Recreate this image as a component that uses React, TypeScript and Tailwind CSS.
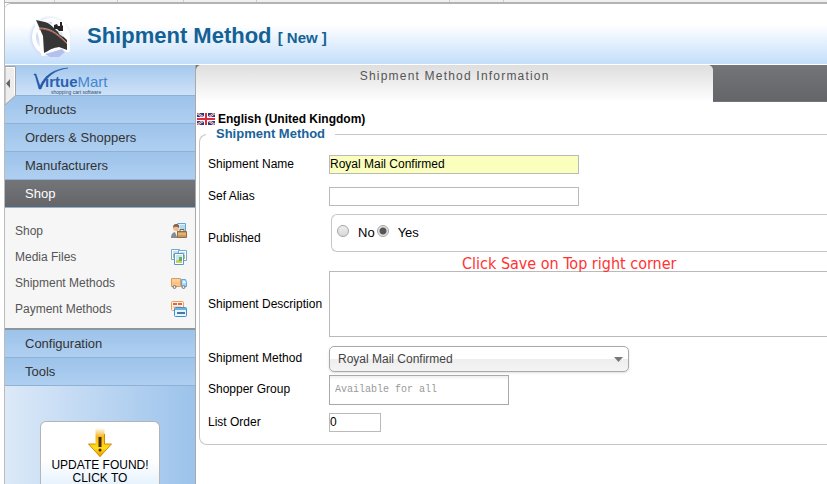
import React, { useState } from 'react';

const MAIN_LINKS = ['Products', 'Orders & Shoppers', 'Manufacturers'];
const BOTTOM_LINKS = ['Configuration', 'Tools'];

const inputClass = 'h-[19px] border border-[#bababa] text-xs text-black outline-none';

const ShipLogo = () => (
  <svg width="46" height="46" viewBox="0 0 46 46" aria-hidden="true">
    <defs>
      <radialGradient id="halo">
        <stop offset="0.75" stopColor="#b9c6ef" />
        <stop offset="1" stopColor="#dfe8fa" stopOpacity="0" />
      </radialGradient>
      <linearGradient id="globe" x1="0" y1="0" x2="1" y2="1">
        <stop offset="0" stopColor="#b4c2ee" />
        <stop offset="0.5" stopColor="#e6ecfb" />
        <stop offset="1" stopColor="#a9b8e8" />
      </linearGradient>
    </defs>
    <circle cx="23" cy="23" r="22" fill="url(#halo)" />
    <circle cx="24" cy="23" r="17" fill="url(#globe)" stroke="#fff" strokeWidth="4" />
    <path
      d="M9 7l11 3 7 4V9h9l2 8 3 9v10l-9-1-10 3-6 2-2-16z"
      fill="#fff"
      stroke="#fff"
      strokeWidth="4"
      strokeLinejoin="round"
    />
    <path d="M18 40l5 3h9l6-5-3-3-10 3z" fill="#b4c1ec" />
    <path d="M9 6l9 2c4 1 7 4 10 7l12 11 0 10-8-3c-6 1-8 2-11 4l-4 2-1-17z" fill="#363636" />
    <path d="M12 15c10 0 16 3 28 15" fill="none" stroke="#c8563c" strokeWidth="1" />
    <path d="M12 14c10 0 16 3 28 15" fill="none" stroke="#e9ded9" strokeWidth="1" strokeOpacity="0.6" />
    <path d="M27 15v-4l3-1 1 2h2V8h2v3l1 1v5h-4l-2-2z" fill="#262626" />
    <path d="M31 17l4 1 1 5-4-3z" fill="#dfe4ee" />
  </svg>
);

const VirtueMartLogo = () => (
  <svg width="80" height="29" viewBox="0 0 80 29" role="img" aria-label="VirtueMart">
    <path d="M1 8h2l4 12C12 9 21 3 35 2 22 4 13 10 8 23H6L2 9H1z" fill="#2459a6" stroke="#2459a6" strokeWidth="0.500" />
    <text x="12" y="21" fontFamily="Liberation Sans, sans-serif" fontSize="15" fill="#2961b2">
      <tspan fontWeight="700">irtue</tspan>
      <tspan fill="#4486d0">Mart</tspan>
    </text>
    <text x="18" y="28" fontFamily="Liberation Sans, sans-serif" fontSize="5" fill="#2f4d76">shopping cart software</text>
  </svg>
);

const ShopIcon = () => (
  <svg width="16" height="16" viewBox="0 0 16 16" aria-hidden="true">
    <path d="M6.500.5h8v11h-8z" fill="#dff2fc" stroke="#5fa8d8" />
    <path d="M9 3h5M9 5h5" stroke="#7cc4ec" />
    <path d="M0 15c0-4 2-6 5-6s5 2 5 6z" fill="#868b93" />
    <path d="M4 9h3l-1 5z" fill="#f4f4f4" />
    <circle cx="5" cy="5" r="3" fill="#f0bd91" />
    <path d="M2 5c0-3 1-4 3-4s4 1 3 4c-1-1-4-2-6 0z" fill="#806050" />
    <path d="M9 8V6.500h4V8" fill="none" stroke="#875a32" />
    <path d="M6.500 8.500h9v6h-9z" fill="#c99a60" stroke="#9c6c38" />
    <path d="M7 11h8" stroke="#efcf98" />
  </svg>
);

const MediaIcon = () => (
  <svg width="16" height="16" viewBox="0 0 16 16" aria-hidden="true">
    <path d="M.5.500h8v10h-8z" fill="#fff" stroke="#75a7d5" />
    <path d="M7.500 1.500h8v10h-8z" fill="#fff" stroke="#75a7d5" />
    <path d="M2 2h5v3H2zM9 3h5v6H9z" fill="#bde2f1" />
    <path d="M2 5h3v4H2zM13 6h1v4h-1z" fill="#a3c95f" />
    <path d="M3.500 4.500h9v11h-9z" fill="#fff" stroke="#5d97ce" />
    <path d="M5 6h6v5H5z" fill="#c4e6f4" />
    <path d="M5 11h6v3H5z" fill="#c6cf62" />
    <path d="M8 8h3v4H8z" fill="#6aae5b" />
  </svg>
);

const TruckIcon = () => (
  <svg width="16" height="16" viewBox="0 0 16 16" aria-hidden="true">
    <path d="M.5 3.500h9v8h-9z" fill="#ffcf9a" stroke="#e39a52" />
    <path d="M1 8h8M1 10h8" stroke="#f5b674" />
    <path d="M10.500 4.500h4l1 3v4h-5z" fill="#a7dbf9" stroke="#5ba6dc" />
    <path d="M12 6h2l1 2h-3z" fill="#edf9ff" />
    <circle cx="3.500" cy="12" r="1.500" fill="#e8e8e8" stroke="#73777d" />
    <circle cx="12.500" cy="12" r="1.500" fill="#e8e8e8" stroke="#73777d" />
  </svg>
);

const PaymentIcon = () => (
  <svg width="16" height="16" viewBox="0 0 16 16" aria-hidden="true">
    <rect x="0.500" y="0.500" width="12" height="9" rx="1" fill="#fff2d8" stroke="#e9a451" />
    <path d="M2 3h4M7 3h4" stroke="#e75f4e" strokeWidth="2" />
    <path d="M2 6h8" stroke="#f1b27a" />
    <rect x="3.500" y="6.500" width="12" height="9" rx="1" fill="#e6f6ff" stroke="#3e8fd0" />
    <path d="M4 8h11" stroke="#68b4e8" strokeWidth="2" />
    <path d="M6 12h8" stroke="#4778a9" strokeWidth="2" />
  </svg>
);

const UpdateIcon = () => (
  <svg width="26" height="30" viewBox="0 0 26 30" aria-hidden="true">
    <defs>
      <linearGradient id="arrow" x1="0" y1="0" x2="0" y2="1">
        <stop offset="0" stopColor="#f6b026" stopOpacity="0" />
        <stop offset="0.3" stopColor="#f6b91c" />
        <stop offset="0.7" stopColor="#ffdc16" />
        <stop offset="1" stopColor="#e99000" />
      </linearGradient>
    </defs>
    <path d="M8.500 0h9v16h7L13 29 1.500 16h7z" fill="url(#arrow)" />
    <path d="M17.500 6v10h7L13 28.500 1.500 16h7" fill="none" stroke="#d48a08" />
    <path d="M11.500 9h3v10h-3z" fill="#4b2a08" />
    <circle cx="13" cy="22" r="1.500" fill="#4b2a08" />
  </svg>
);

const UkFlag = () => (
  <svg width="18" height="12" viewBox="0 0 18 12" role="img" aria-label="United Kingdom">
    <path d="M0 0h18v12H0z" fill="#283c80" />
    <path d="M0 0l18 12M18 0L0 12" stroke="#fff" strokeWidth="2" />
    <path d="M0 0l18 12M18 0L0 12" stroke="#d63b4b" strokeWidth="1" />
    <path d="M9 0v12M0 6h18" stroke="#fff" strokeWidth="4" />
    <path d="M9 0v12M0 6h18" stroke="#d82c3f" strokeWidth="2" />
  </svg>
);

const SHOP_LINKS = [
  { label: 'Shop', Icon: ShopIcon },
  { label: 'Media Files', Icon: MediaIcon },
  { label: 'Shipment Methods', Icon: TruckIcon },
  { label: 'Payment Methods', Icon: PaymentIcon },
];

const MenuLink: React.FC<{ label: string }> = ({ label }) => (
  <a
    href="#"
    className="flex h-7 items-center border-b border-[#8fb1d3] bg-linear-to-b from-[#9dc3ea] to-[#aecff1] pl-5 text-[13px] text-[#333]"
  >
    {label}
  </a>
);

const Row: React.FC<{ label: string; id: string; className: string; children: React.ReactNode }> = ({
  label,
  id,
  className,
  children,
}) => (
  <div className={`flex items-center ${className}`}>
    <label htmlFor={id} id={`${id}-label`} className="w-[121px] shrink-0 text-xs whitespace-nowrap">
      {label}
    </label>
    {children}
  </div>
);

const Sidebar = () => (
  <aside className="relative flex w-[191px] shrink-0 flex-col border-r border-[#a9a9a9] bg-linear-to-r from-[#dce9f8] to-[#9cc3eb]">
    <button type="button" aria-label="Collapse menu" className="absolute top-0 left-0">
      <svg width="12" height="42" viewBox="0 0 12 42" aria-hidden="true">
        <path d="M0 1.500h10.500v29L0 40z" fill="#ededed" stroke="#a3a3a3" strokeWidth="1" />
        <path d="M1 2.500h8.500v27" fill="none" stroke="#fff" />
        <path d="M5 14v9l-4-4.500z" fill="#666" />
      </svg>
    </button>
    <div className="flex h-[31px] items-start border-b border-[#8fb1d3] bg-linear-to-b from-[#a4c8ed] to-[#cee2f8] pt-px pl-7">
      <VirtueMartLogo />
    </div>
    <nav>
      {MAIN_LINKS.map((label) => (
        <MenuLink key={label} label={label} />
      ))}
      <a
        href="#"
        className="flex h-7 items-center border-b border-[#8fb1d3] bg-linear-to-b from-[#747578] to-[#646568] pl-5 text-[13px] text-white"
      >
        Shop
      </a>
      <ul className="border-b-2 border-[#8e979f] bg-[#f6f6f6] pt-2.5 pr-2 pb-1.5 pl-2.5">
        {SHOP_LINKS.map(({ label, Icon }) => (
          <li key={label}>
            <a href="#" className="flex h-[26px] items-center justify-between text-xs text-[#555]">
              {label}
              <Icon />
            </a>
          </li>
        ))}
      </ul>
      {BOTTOM_LINKS.map((label) => (
        <MenuLink key={label} label={label} />
      ))}
    </nav>
    <a
      href="#"
      className="mx-auto mt-[35px] flex w-[120px] flex-1 flex-col items-center rounded-t-md border border-b-0 border-[#b4b4b4] bg-linear-to-b from-white from-60% to-[#e6f2fd] pt-1.5 text-center text-xs leading-[13px] text-black"
    >
      <UpdateIcon />
      <span className="mt-px">UPDATE FOUND! CLICK TO</span>
    </a>
  </aside>
);

const radioClass =
  'h-3 w-3 appearance-none rounded-full border border-[#a5a5a5] bg-linear-to-b from-[#eee] to-[#d8d8d8] checked:bg-[radial-gradient(circle,#555_0_3px,#e2e2e2_4px)]';

const ShipmentForm = () => {
  const [name, setName] = useState('Royal Mail Confirmed');
  const [alias, setAlias] = useState('');
  const [published, setPublished] = useState(true);
  const [description, setDescription] = useState('');
  const [order, setOrder] = useState('0');

  return (
    <form className="pl-[3px]">
      <fieldset className="min-w-0 rounded-l-lg border border-r-0 border-[#c6c6c6] pb-1.5 pl-2">
        <legend className="-ml-0.5 h-4 px-2.5 text-[13px] leading-4 font-bold text-[#1a629a]">Shipment Method</legend>
        <div className="pt-1.5">
          <Row label="Shipment Name" id="name" className="h-8">
            <input id="name" value={name} onChange={(e) => setName(e.target.value)} className={`w-[250px] bg-[#faffbd] ${inputClass}`} />
          </Row>
          <Row label="Sef Alias" id="alias" className="h-8">
            <input id="alias" value={alias} onChange={(e) => setAlias(e.target.value)} className={`w-[250px] bg-white ${inputClass}`} />
          </Row>
          <Row label="Published" id="published" className="h-[52px]">
            <div
              role="radiogroup"
              aria-labelledby="published-label"
              className="mt-0.5 ml-0.5 flex h-[38px] flex-1 items-center self-start rounded-l-md border border-r-0 border-[#c6c6c6] pl-[5px] text-[13px]"
            >
              <input type="radio" id="published-no" name="published" checked={!published} onChange={() => setPublished(false)} className={`mb-1 ${radioClass}`} />
              <label htmlFor="published-no" className="ml-[9px]">No</label>
              <input type="radio" id="published" name="published" checked={published} onChange={() => setPublished(true)} className={`mb-1 ml-0.5 ${radioClass}`} />
              <label htmlFor="published" className="ml-[9px]">Yes</label>
            </div>
          </Row>
          <Row label="Shipment Description" id="description" className="relative h-20">
            <textarea
              id="description"
              value={description}
              onChange={(e) => setDescription(e.target.value)}
              className="h-[66px] flex-1 resize-none border border-r-0 border-[#bababa] bg-white p-1 text-xs outline-none"
            />
            <p className="absolute -top-2.5 left-[254px] font-['DejaVu_Sans_Condensed','DejaVu_Sans',sans-serif] text-base leading-5 whitespace-nowrap text-[#f33]">
              Click Save on Top right corner
            </p>
          </Row>
          <Row label="Shipment Method" id="method" className="h-7">
            <div className="relative mt-px w-[300px]">
              <select
                id="method"
                className="block h-[26px] w-full appearance-none rounded-[5px] border border-[#a9a9a9] bg-linear-to-b from-white from-50% via-[#eee] via-52% to-[#f4f4f4] pl-2 text-xs text-[#444] shadow-sm outline-none"
              >
                <option>Royal Mail Confirmed</option>
              </select>
              <svg width="9" height="5" viewBox="0 0 9 5" className="pointer-events-none absolute top-[11px] right-1.5" aria-hidden="true">
                <path d="M0 0h9L4.500 5z" fill="#777" />
              </svg>
            </div>
          </Row>
          <Row label="Shopper Group" id="group" className="h-[34px]">
            <input
              id="group"
              placeholder="Available for all"
              className="mt-px h-[30px] w-[180px] border border-[#a9a9a9] bg-white bg-linear-to-b from-[#eee] to-white to-15% px-[5px] font-['Liberation_Mono'] text-[10px] outline-none placeholder:text-[#999]"
            />
          </Row>
          <Row label="List Order" id="order" className="h-8">
            <input id="order" value={order} onChange={(e) => setOrder(e.target.value)} className={`w-[52px] bg-white ${inputClass}`} />
          </Row>
        </div>
      </fieldset>
    </form>
  );
};

export default function App() {
  return (
    <div className="flex min-h-screen flex-col overflow-hidden bg-white pl-1 font-['Liberation_Sans',Arial,sans-serif] text-black">
      <div className="flex h-[3px] border-b border-l border-[#b3b3b3] bg-[#f0f0f0]">
        <span className="w-[50px] border-r border-[#ccc]" />
        <span className="w-[63px] border-r border-[#ccc]" />
        <span className="w-[66px] border-r border-[#ccc]" />
        <span className="w-[73px] border-r border-[#ccc]" />
        <span className="w-[193px] border-r border-[#ccc]" />
        <span className="w-[54px] border-r border-[#ccc]" />
      </div>
      <div className="flex flex-1 flex-col border-l border-[#bbb]">
        <header className="flex h-[62px] items-center rounded-tl-md border-t border-b border-t-[#b3b3b3] border-b-white bg-linear-to-b from-white from-35% to-[#c3defa] pt-1.5 pl-[22px]">
          <ShipLogo />
          <h1 className="ml-3.5 text-[22px] leading-7 font-bold text-[#146295]">
            Shipment Method <small className="text-[15px]">[ New ]</small>
          </h1>
        </header>
        <div className="flex flex-1">
          <Sidebar />
          <main className="min-w-0 flex-1">
            <div role="tablist" className="flex h-[37px] border-b border-[#747578] bg-linear-to-b from-[#747578] to-[#646568]">
              <button
                type="button"
                role="tab"
                aria-selected="true"
                className="-mb-px w-[82%] rounded-t-[5px] bg-linear-to-b from-[#dedede] to-white pb-4 text-xs tracking-widest text-[#555]"
              >
                Shipment Method Information
              </button>
            </div>
            <div className="flex items-center gap-[3px] pt-2.5 pl-px text-xs leading-[14px] font-bold">
              <UkFlag />
              English (United Kingdom)
            </div>
            <ShipmentForm />
          </main>
        </div>
      </div>
    </div>
  );
}
